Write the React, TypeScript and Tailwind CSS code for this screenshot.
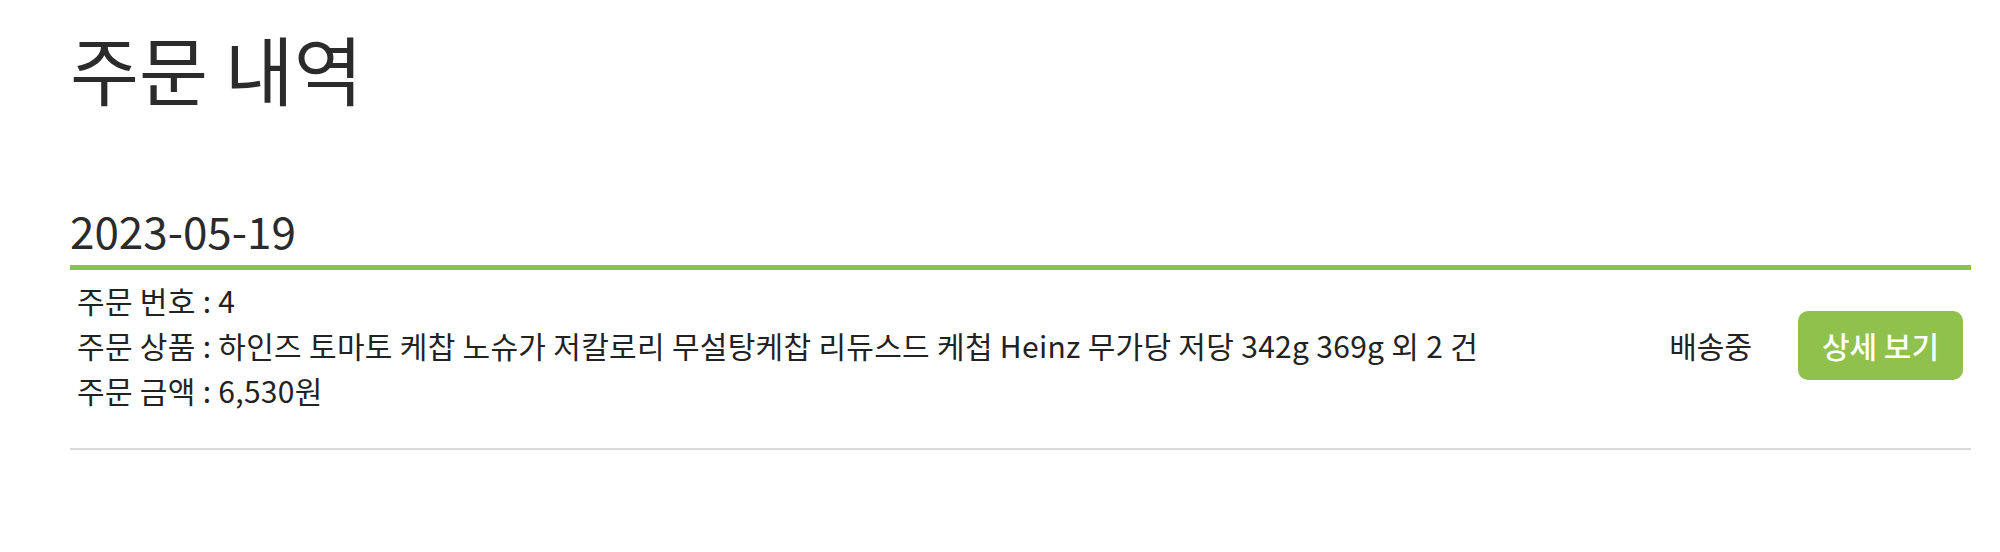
export default function App() {
  return (
    <div
      className="w-[2000px] h-[552px] bg-white text-[#2b2b2b] pl-[70px] pr-[29px]"
      style={{ fontFamily: '"Noto Sans CJK KR", "Noto Sans", sans-serif' }}
    >
      <h1 className="pt-[24px] text-[75px] leading-[88px] font-normal">주문 내역</h1>

      <section className="mt-[92px]">
        <h2 className="text-[44px] leading-[52px] font-normal pb-[9px] border-b-[5px] border-[#8bc34a]">
          2023-05-19
        </h2>

        {/* order row */}
        <div className="flex items-center pl-[7px] pt-[8px] pb-[35px] border-b-2 border-[#d9d9d9]">
          <div className="flex-1 text-[30px] leading-[45px] tracking-[0.3px] text-[#222]">
            <p>주문 번호 : 4</p>
            <p>
              주문 상품 : 하인즈 토마토 케찹 노슈가 저칼로리 무설탕케찹 리듀스드 케첩 Heinz 무가당 저당 342g 369g 외 2 건
            </p>
            <p>주문 금액 : 6,530원</p>
          </div>
          <span className="text-[30px] text-[#222] mr-[46px]">배송중</span>
          <button className="w-[165px] h-[69px] mr-[8px] rounded-[10px] bg-[#8fc14c] text-white text-[30px] font-medium">
            상세 보기
          </button>
        </div>
      </section>
    </div>
  );
}
